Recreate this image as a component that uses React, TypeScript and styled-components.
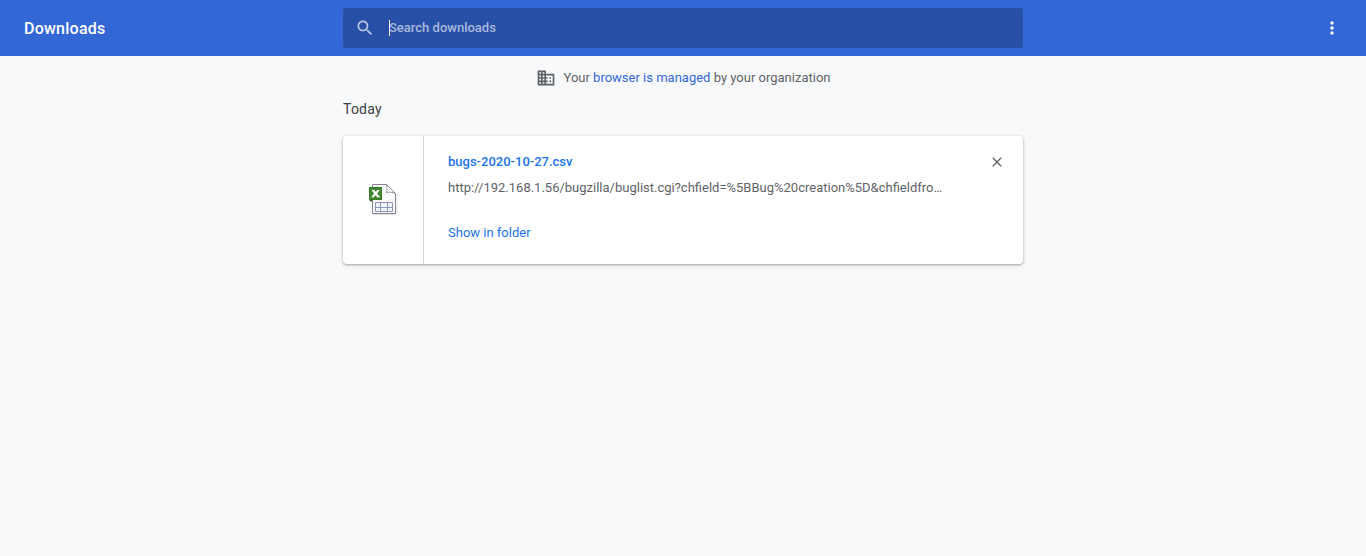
import React from "react";
import styled, { createGlobalStyle } from "styled-components";

const GlobalStyle = createGlobalStyle`
  * { box-sizing: border-box; }
  body {
    margin: 0;
    background: #f8f9fa;
    color: #5f6368;
    font: 13px/20px Roboto, "Liberation Sans", sans-serif;
  }
`;

const Toolbar = styled.header`
  display: grid;
  grid-template-columns: minmax(120px, 1fr) minmax(0, 680px) minmax(60px, 1fr);
  align-items: center;
  height: 56px;
  background: #3367d6;
  color: #fff;
`;

const Title = styled.h1`
  margin: 0;
  padding: 2px 0 0 24px;
  font-size: 16px;
  font-weight: 500;
  letter-spacing: 0.015em;
`;

const SearchBox = styled.label`
  display: flex;
  align-items: center;
  height: 40px;
  padding: 0 12px;
  border-radius: 2px;
  background: #2850a7;
  color: #b8c7e6;
`;

const Caret = styled.span`
  width: 1px;
  height: 16px;
  margin: 0 -1px 0 14px;
  background: #fff;
`;

const SearchInput = styled.input`
  flex: 1;
  min-width: 0;
  padding: 0;
  border: 0;
  outline: 0;
  background: transparent;
  color: #fff;
  caret-color: transparent;
  font: 500 13px/20px Roboto, "Liberation Sans", sans-serif;
  &::placeholder { color: #a9b9dc; opacity: 1; }
`;

const IconButton = styled.button`
  display: flex;
  align-items: center;
  justify-content: center;
  flex: none;
  width: 32px;
  height: 32px;
  padding: 0;
  border: 0;
  border-radius: 50%;
  background: transparent;
  color: inherit;
  cursor: pointer;
`;

const MenuArea = styled.div`
  display: flex;
  justify-content: flex-end;
  padding-right: 18px;
`;

const Icon = styled.svg<{ $size: number }>`
  display: block;
  flex: none;
  width: ${(p) => p.$size}px;
  height: ${(p) => p.$size}px;
  fill: currentColor;
`;

const Content = styled.main`
  max-width: 680px;
  margin: 0 auto;
  padding-bottom: 24px;
`;

const ManagedNotice = styled.div`
  display: flex;
  align-items: center;
  justify-content: center;
  gap: 8px;
  padding-top: 12px;
`;

const Link = styled.a<{ $color?: string; $strong?: boolean }>`
  color: ${(p) => p.$color ?? "#1a73e8"};
  font-weight: ${(p) => (p.$strong ? 500 : 400)};
  text-decoration: none;
`;

const DateHeading = styled.h2`
  margin: 11px 0 17px;
  color: #3c4043;
  font-size: 14px;
  font-weight: 400;
  line-height: 20px;
  letter-spacing: 0.015em;
`;

const Card = styled.article`
  display: flex;
  min-height: 128px;
  border-radius: 4px;
  background: #fff;
  box-shadow: 0 1px 2px rgba(60, 64, 67, 0.3), 0 1px 3px 1px rgba(60, 64, 67, 0.15);
`;

const FileIconArea = styled.div`
  display: flex;
  align-items: center;
  justify-content: center;
  flex: none;
  width: 81px;
  border-right: 1px solid #d8d8d8;
`;

const Details = styled.div`
  flex: 1;
  min-width: 0;
  padding: 16px 0 20px 24px;
`;

const Url = styled.div`
  margin: 6px 0 25px;
  overflow: hidden;
  text-overflow: ellipsis;
  white-space: nowrap;
`;

const RemoveArea = styled.div`
  flex: none;
  width: 80px;
  padding: 10px 10px 0 0;
  display: flex;
  justify-content: flex-end;
`;

function SpreadsheetIcon() {
  return (
    <svg width="32" height="32" viewBox="0 0 32 32" aria-hidden="true">
      <path d="M6 30.5h24V10" fill="none" stroke="#e3e3e6" />
      <path d="M5.5.5h14l9 9v20h-23z" fill="#f8f8fd" stroke="#85868e" />
      <path d="M19.5.5c1 3 .8 5.500 0 8 3-1 6-.5 9 1z" fill="#e8e8f0" stroke="#85868e" />
      <path d="M20.500 2v6c2-.6 4-.5 6 .2z" fill="#fff" />
      <path d="M8.500 18.500h17v9h-17z" fill="#eff3fb" stroke="#8d95b0" />
      <path d="M13.500 18.500v9M20.500 18.500v9M8.500 23.500h17" fill="none" stroke="#8d95b0" />
      <path d="M2 16h3v2z" fill="#23591a" />
      <path d="M2 3h13v13H2z" fill="#438832" />
      <path d="M2.500 3.500h12v12h-12z" fill="none" stroke="#367a27" />
      <path d="M4.500 6h3l1.200 1.900L10.200 6h2.600l-2.700 3.500 3 3.700h-3l-1.600-2.100L6.800 13.200H4.200l2.900-3.700z" fill="#fff" />
    </svg>
  );
}

export default function App() {
  return (
    <>
      <GlobalStyle />
      <Toolbar>
        <Title>Downloads</Title>
        <SearchBox>
          <Icon $size={20} viewBox="0 0 24 24" aria-hidden="true">
            <path d="M15.500 14h-.79l-.28-.27C15.410 12.590 16 11.110 16 9.500 16 5.910 13.090 3 9.500 3S3 5.910 3 9.500 5.910 16 9.500 16c1.610 0 3.090-.59 4.230-1.570l.27.28v.79l5 4.990L20.490 19l-4.990-5zm-6 0C7.010 14 5 11.990 5 9.500S7.010 5 9.500 5 14 7.010 14 9.500 11.990 14 9.500 14z" />
          </Icon>
          <Caret />
          <SearchInput type="text" placeholder="Search downloads" aria-label="Search downloads" />
        </SearchBox>
        <MenuArea>
          <IconButton aria-label="More actions">
            <Icon $size={20} viewBox="0 0 24 24" aria-hidden="true">
              <path d="M12 8c1.100 0 2-.9 2-2s-.9-2-2-2-2 .9-2 2 .9 2 2 2zm0 2c-1.100 0-2 .9-2 2s.9 2 2 2 2-.9 2-2-.9-2-2-2zm0 6c-1.100 0-2 .9-2 2s.9 2 2 2 2-.9 2-2-.9-2-2-2z" />
            </Icon>
          </IconButton>
        </MenuArea>
      </Toolbar>
      <Content>
        <ManagedNotice>
          <Icon $size={20} viewBox="0 0 24 24" aria-hidden="true">
            <path d="M12 7V3H2v18h20V7H12zM6 19H4v-2h2v2zm0-4H4v-2h2v2zm0-4H4V9h2v2zm0-4H4V5h2v2zm4 12H8v-2h2v2zm0-4H8v-2h2v2zm0-4H8V9h2v2zm0-4H8V5h2v2zm10 12h-8v-2h2v-2h-2v-2h2v-2h-2V9h8v10zm-2-8h-2v2h2v-2zm0 4h-2v2h2v-2z" />
          </Icon>
          <span>
            Your <Link href="#managed" $color="#3367d6">browser is managed</Link> by your organization
          </span>
        </ManagedNotice>
        <DateHeading>Today</DateHeading>
        <Card>
          <FileIconArea>
            <SpreadsheetIcon />
          </FileIconArea>
          <Details>
            <Link href="#file" $strong>bugs-2020-10-27.csv</Link>
            <Url>http://192.168.1.56/bugzilla/buglist.cgi?chfield=%5BBug%20creation%5D&amp;chfieldfro…</Url>
            <Link href="#folder">Show in folder</Link>
          </Details>
          <RemoveArea>
            <IconButton aria-label="Remove from list">
              <Icon $size={16} viewBox="0 0 24 24" aria-hidden="true">
                <path d="M19 6.410L17.590 5 12 10.590 6.410 5 5 6.410 10.590 12 5 17.590 6.410 19 12 13.410 17.590 19 19 17.590 13.410 12z" />
              </Icon>
            </IconButton>
          </RemoveArea>
        </Card>
      </Content>
    </>
  );
}
